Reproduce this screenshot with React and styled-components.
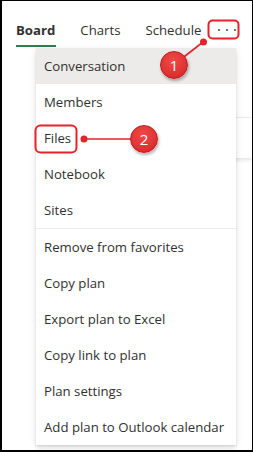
import React from "react";
import styled, { createGlobalStyle } from "styled-components";

const Global = createGlobalStyle`
  html, body { margin: 0; padding: 0; background: #fff; }
  body { font-family: "Open Sans", "Noto Sans", sans-serif; }
`;

const Frame = styled.div`
  position: relative;
  box-sizing: border-box;
  width: 253px;
  height: 452px;
  border-style: solid;
  border-color: #000;
  border-width: 1px 1px 2px 2px;
  background: #fff;
  overflow: hidden;
`;

const TabBar = styled.div`
  display: flex;
  align-items: flex-start;
  padding: 19px 12px 0 14px;
  height: 29px;
`;

const TabList = styled.div`
  display: flex;
  gap: 25px;
`;

const Tab = styled.div`
  position: relative;
  height: 27px;
  line-height: 20px;
  font-size: 13.2px;
  color: #323130;
  font-weight: ${(p) => (p.$active ? 700 : 400)};
  &::after {
    content: "";
    display: ${(p) => (p.$active ? "block" : "none")};
    position: absolute;
    left: 0;
    right: -1px;
    top: 25px;
    height: 2px;
    background: #2e7d4f;
  }
`;

const MoreButton = styled.div`
  display: flex;
  align-items: center;
  gap: 5.5px;
  height: 20px;
  margin-left: auto;
  padding: 0 4px 0 7.5px;
`;

const Dot = styled.span`
  width: 2.5px;
  height: 2.5px;
  border-radius: 50%;
  background: #484644;
`;

const Content = styled.div`
  padding: 68px 0 0 40px;
`;

const Card = styled.div`
  height: 40px;
  border-top: 1px solid #edebe9;
  box-shadow: 0 2px 4px rgba(0, 0, 0, 0.12);
  background: #fff;
`;

const Menu = styled.div`
  position: absolute;
  left: 34px;
  top: 47px;
  width: 200px;
  background: #fff;
  box-shadow: 0 3px 7px rgba(0, 0, 0, 0.13), 0 0.6px 1.8px rgba(0, 0, 0, 0.11);
  display: flex;
  flex-direction: column;
`;

const Item = styled.div`
  height: 36px;
  display: flex;
  align-items: center;
  padding-left: 8px;
  font-size: 13.2px;
  color: #323130;
  background: ${(p) => (p.$hover ? "#edebe9" : "#fff")};
  white-space: nowrap;
`;

const Divider = styled.div`
  height: 1px;
  background: #edebe9;
`;

const Overlay = styled.svg`
  position: absolute;
  left: -2px;
  top: -1px;
  width: 253px;
  height: 452px;
  pointer-events: none;
`;

const Badge = styled.div`
  position: absolute;
  left: ${(p) => p.$x - 2 - 14}px;
  top: ${(p) => p.$y - 1 - 14}px;
  width: 28px;
  height: 28px;
  box-sizing: border-box;
  border-radius: 50%;
  border: 1.5px solid #b81d20;
  background: radial-gradient(circle at 45% 35%, #ef4a48 0%, #e23535 55%, #c92224 100%);
  box-shadow: 1px 2px 3px rgba(0, 0, 0, 0.3);
  color: #fff;
  font-family: "Open Sans", "Noto Sans", sans-serif;
  font-size: 15px;
  display: flex;
  align-items: center;
  justify-content: center;
  line-height: 1;
`;

const menuTop = ["Conversation", "Members", "Files", "Notebook", "Sites"];
const menuBottom = [
  "Remove from favorites",
  "Copy plan",
  "Export plan to Excel",
  "Copy link to plan",
  "Plan settings",
  "Add plan to Outlook calendar",
];

export default function App() {
  return (
    <>
      <Global />
      <Frame>
        <TabBar>
          <TabList>
            <Tab $active>Board</Tab>
            <Tab>Charts</Tab>
            <Tab>Schedule</Tab>
          </TabList>
          <MoreButton>
            <Dot />
            <Dot />
            <Dot />
          </MoreButton>
        </TabBar>
        <Content>
          <Card />
        </Content>
        <Menu>
          {menuTop.map((t, i) => (
            <Item key={t} $hover={i === 0}>{t}</Item>
          ))}
          <Divider />
          {menuBottom.map((t) => (
            <Item key={t}>{t}</Item>
          ))}
        </Menu>
        <Overlay viewBox="0 0 253 452">
          <rect x="208.5" y="20.5" width="30" height="18" rx="4" fill="none" stroke="#e8212b" strokeWidth="2" />
          <line x1="203" y1="42" x2="180" y2="60" stroke="#e8212b" strokeWidth="1.6" />
          <circle cx="203.5" cy="42" r="3.5" fill="#e8212b" />
          <rect x="35.5" y="125.5" width="41" height="27" rx="5" fill="none" stroke="#e8212b" strokeWidth="2" />
          <line x1="84" y1="139" x2="131" y2="139" stroke="#e8212b" strokeWidth="1.6" />
          <circle cx="84" cy="139" r="3.5" fill="#e8212b" />
        </Overlay>
        <Badge $x={174} $y={65}>1</Badge>
        <Badge $x={144} $y={139}>2</Badge>
      </Frame>
    </>
  );
}
